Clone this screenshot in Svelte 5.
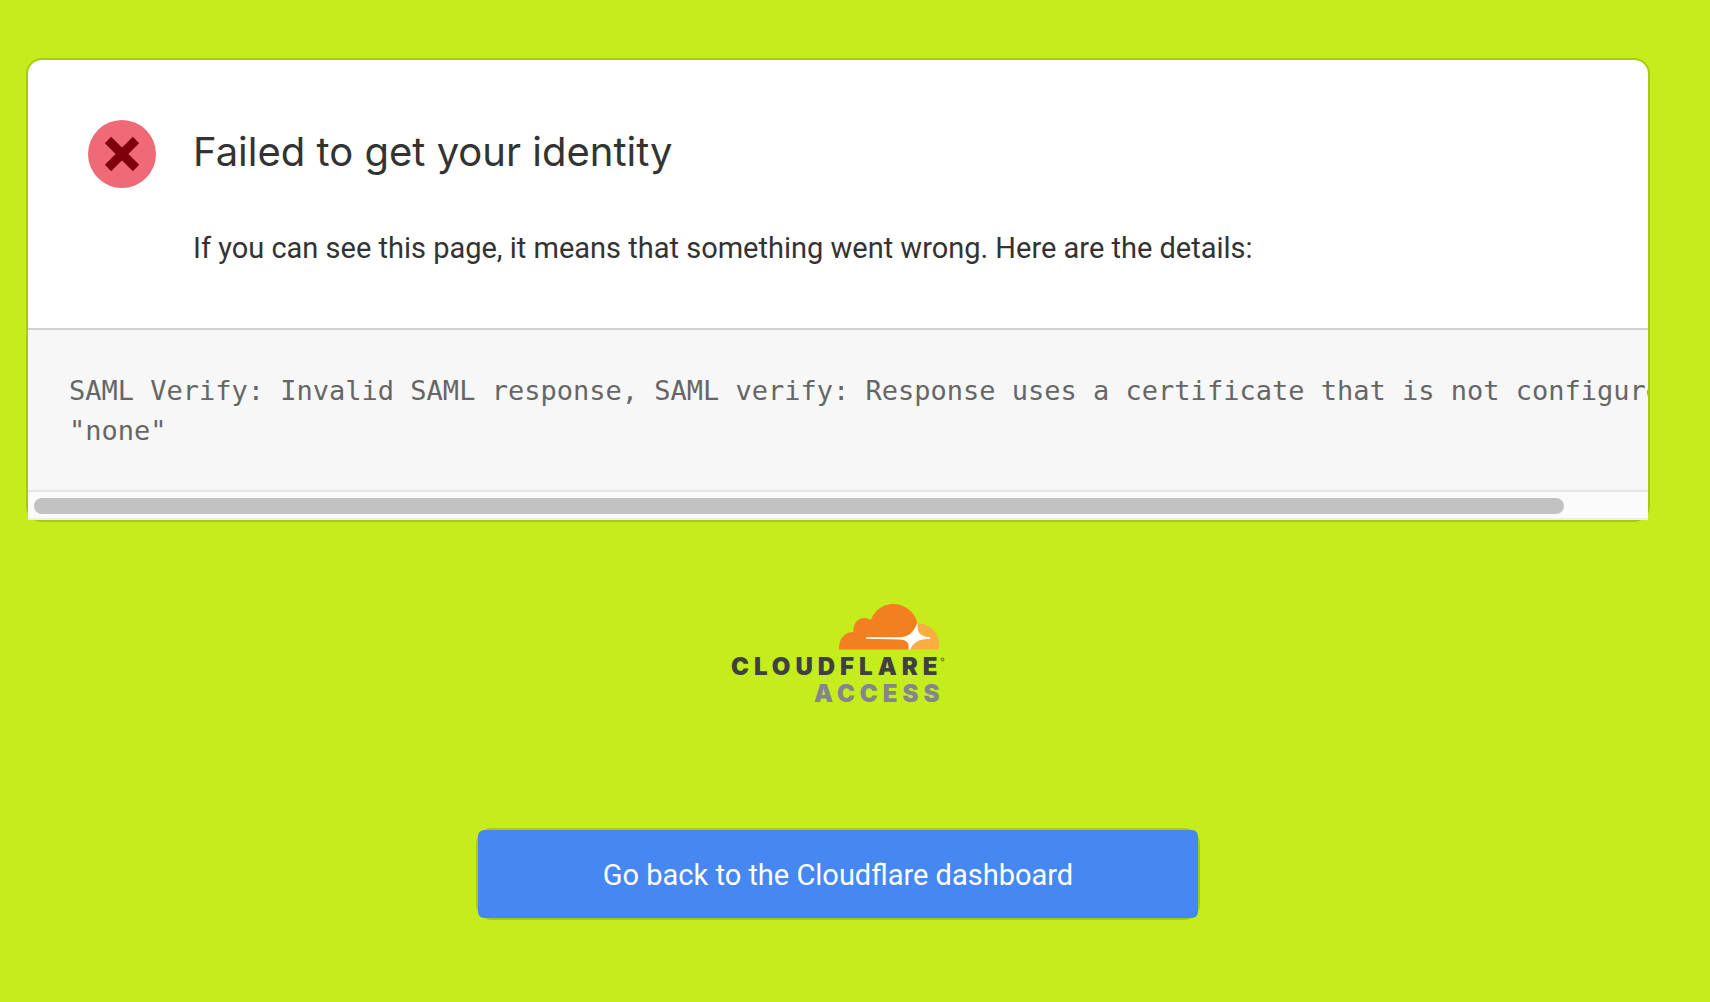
<script>
  let pane = $state();
  let left = $state(0);
  let visible = $state(1);

  function measure() {
    if (!pane) return;
    visible = pane.clientWidth / pane.scrollWidth;
    left = pane.scrollLeft / pane.scrollWidth;
  }

  $effect(() => {
    measure();
  });
</script>

<svelte:window onresize={measure} />

<main class="page">
  <section class="card">
    <header class="intro">
      <svg class="status" viewBox="0 0 68 68" role="img" aria-label="Error">
        <circle cx="34" cy="34" r="34" fill="#ef6a76" />
        <path d="M20 20 48 48M48 20 20 48" stroke="#7f000c" stroke-width="9" />
      </svg>
      <div class="message">
        <h1>Failed to get your identity</h1>
        <p>If you can see this page, it means that something went wrong. Here are the details:</p>
      </div>
    </header>
    <div class="details">
      <pre bind:this={pane} onscroll={measure}><code>SAML Verify: Invalid SAML response, SAML verify: Response uses a certificate that is not configured,
"none"</code></pre>
      <div class="track" aria-hidden="true">
        <div class="rail">
          <div class="thumb" style="width: {visible * 100}%; margin-left: {left * 100}%"></div>
        </div>
      </div>
    </div>
  </section>

  <svg class="logo" viewBox="-4 0 220 104" role="img" aria-label="Cloudflare Access">
    <path d="M184 21.500A21.500 21.500 0 0 1 207.300 42Q207.300 45 206.500 47.500H176Z" fill="#fbad41" />
    <path d="M107 47.500C106.500 37 112.500 30 121.500 29.800C120.500 18.500 130.500 12.500 138.700 18C143 8 151 2 161.300 2C173 2 183 10 185.500 21.500L181 36L177 47.500Z" fill="#f38020" />
    <path d="M186 21.500C184.600 29 187 34.500 198 35.300V36.800C187 37.200 181.500 40 178.300 47.500H176.300C178 41 174.500 38 168 37.500L134 36.800V35.300L168 35.200C178 34.800 182 29 185 21.500Z" fill="#fff" />
    <text class="brand" x="-1" y="73">CLOUDFLARE</text>
    <text class="product" x="82" y="100">ACCESS</text>
    <circle cx="210.500" cy="57.500" r="1.400" fill="none" stroke="#404041" stroke-width="0.800" />
  </svg>

  <div class="action">
    <a href="#dashboard">Go back to the Cloudflare dashboard</a>
  </div>
</main>

<style>
  :global(body) {
    margin: 0;
    background: #c4ed1b;
  }

  .page {
    display: flex;
    flex-direction: column;
    align-items: center;
    padding: 58px 60px 82px 26px;
    font-family: Roboto, 'Liberation Sans', sans-serif;
    color: #333;
  }

  .card,
  .action {
    box-sizing: border-box;
    border: 2px solid rgba(0, 0, 0, 0.15);
    border-radius: 16px;
  }

  .card {
    width: 100%;
    background: #fff padding-box;
  }

  .intro {
    display: flex;
    gap: 37px;
    padding: 60px 60px 56px;
  }

  .status {
    flex: none;
    width: 68px;
    height: 68px;
  }

  .message {
    min-width: 0;
  }

  h1 {
    margin: 0;
    font-family: Inter, 'Liberation Sans', sans-serif;
    font-size: 40px;
    font-weight: 400;
    line-height: 64px;
  }

  p {
    margin: 40px 0 0;
    font-size: 29px;
    line-height: 48px;
  }

  .details {
    border-top: 2px solid #d0d0d0;
    background: #f7f7f7;
  }

  pre {
    margin: 0;
    padding: 41px 36px 39px 41px;
    overflow-x: auto;
    scrollbar-width: none;
    color: #666;
    font-family: 'DejaVu Sans Mono', monospace;
    font-size: 27px;
    line-height: 40px;
  }

  code {
    font-family: inherit;
  }

  .track {
    padding: 6px 6px 4px;
    border-top: 2px solid #e6e6e6;
    border-bottom: 2px solid #eee;
    background: #fbfbfb;
  }

  .rail {
    display: flex;
  }

  .thumb {
    height: 16px;
    border-radius: 8px;
    background: #c2c2c2;
  }

  .logo {
    width: 220px;
    height: 104px;
    margin: 80px 0 122px;
    overflow: visible;
  }

  .brand,
  .product {
    font-family: Inter, sans-serif;
    font-size: 24px;
    font-weight: 900;
    letter-spacing: 5px;
  }

  .brand {
    fill: #404041;
  }

  .product {
    fill: #85868a;
  }

  .action {
    width: 724px;
    max-width: 100%;
  }

  a {
    display: block;
    padding: 21px 20px 19px;
    border-radius: 6px;
    background: #4787f2;
    color: #fff;
    font-size: 29px;
    line-height: 48px;
    text-align: center;
    text-decoration: none;
  }
</style>
